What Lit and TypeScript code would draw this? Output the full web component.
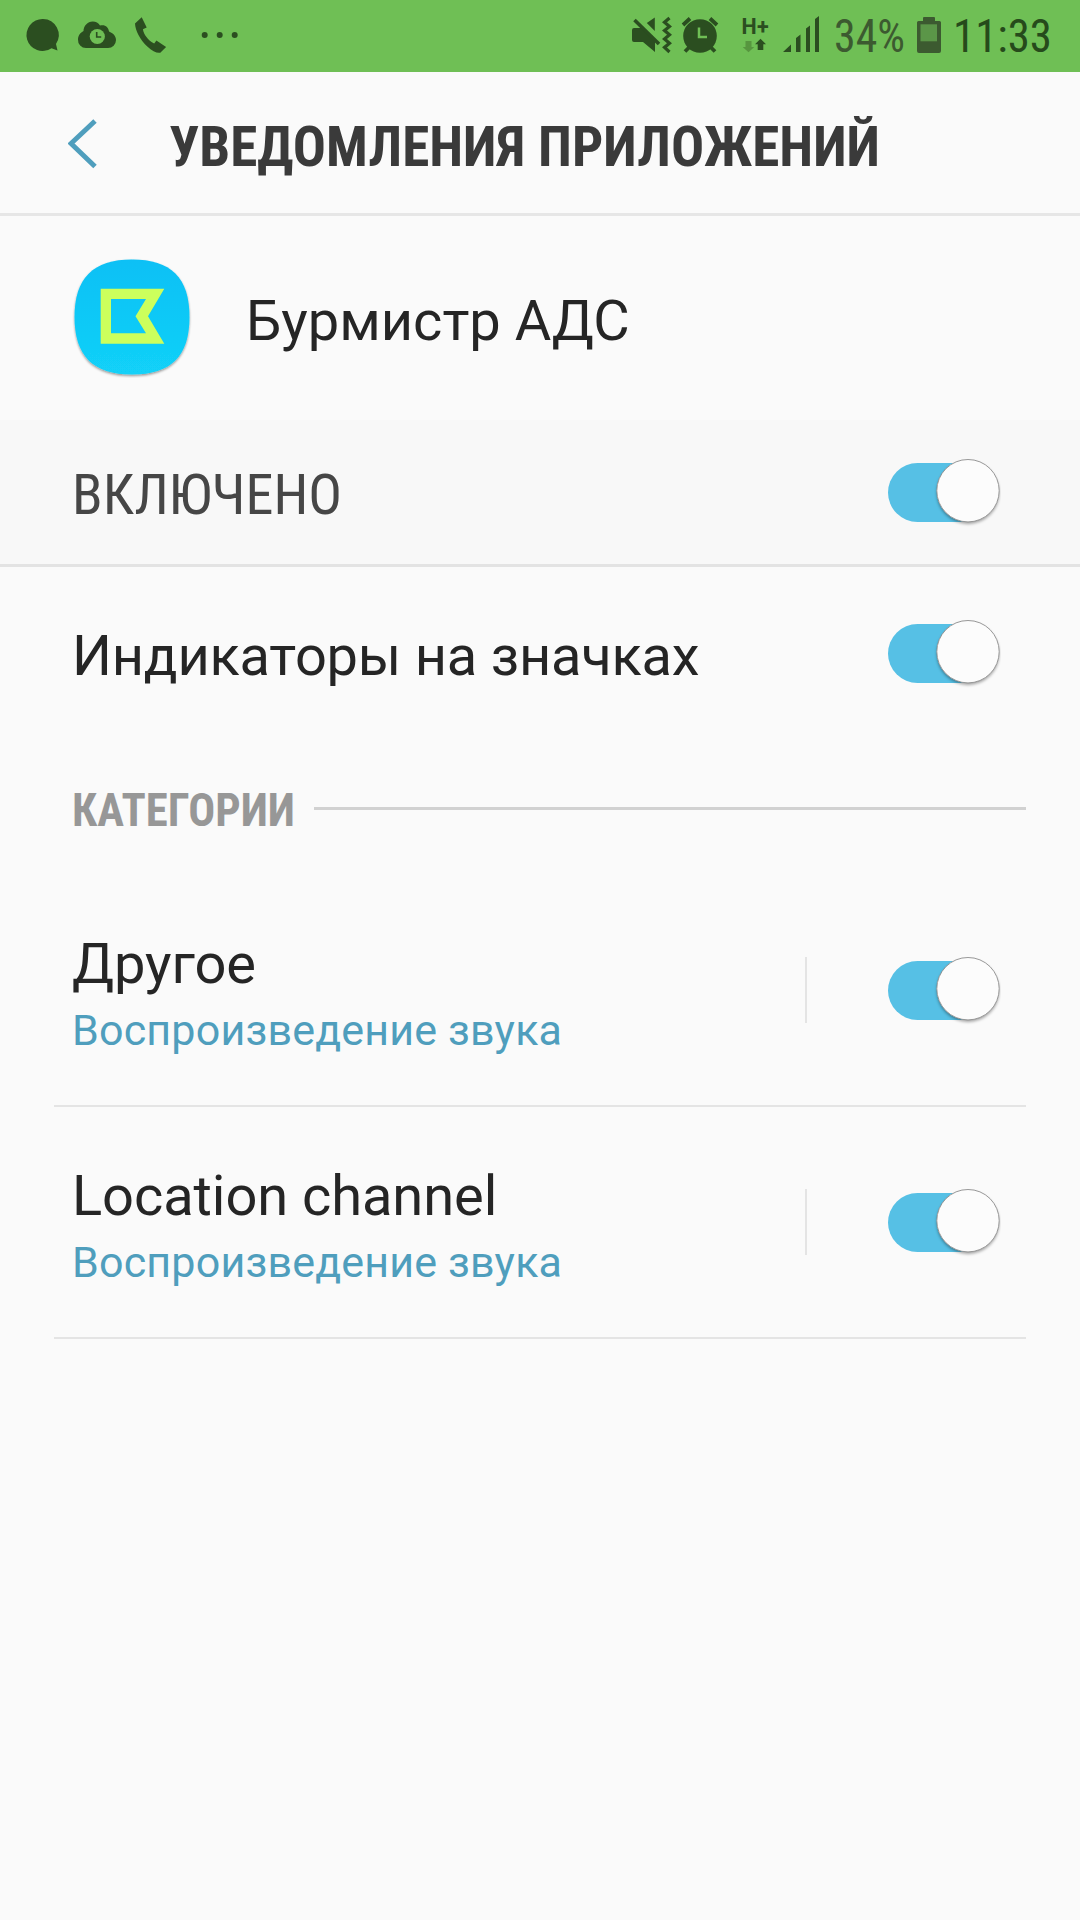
import { LitElement, html, css } from "lit";
import { customElement, property } from "lit/decorators.js";

@customElement("toggle-switch")
class ToggleSwitch extends LitElement {
  static styles = css`
    :host { display: block; flex: none; width: 113px; height: 68px; }
    svg { display: block; }
    .thumb { filter: drop-shadow(0 2px 1.5px rgba(0, 0, 0, 0.35)); }
  `;
  render() {
    return html`<svg width="113" height="68" viewBox="0 0 113 68">
      <rect x="0" y="4" width="106" height="59" rx="29.5" fill="#56c0e5" />
      <circle class="thumb" cx="80" cy="31.700" r="31.200" fill="#fcfcfc" />
      <circle cx="80" cy="31.700" r="31.200" fill="#fcfcfc" stroke="#8c8c8c" stroke-width="0.900" />
    </svg>`;
  }
}

@customElement("condensed-text")
class CondensedText extends LitElement {
  @property({ type: Number }) size = 56;
  @property({ type: Number }) width = 100;
  @property({ type: Number }) weight = 400;
  @property() text = "";
  static styles = css`
    :host { display: block; flex: none; }
    svg { display: block; overflow: visible; }
    text { font-family: "Roboto Condensed", Roboto, "Liberation Sans", sans-serif; font-stretch: 75%; fill: currentColor; }
  `;
  render() {
    const h = Math.round(this.size * 1.2);
    return html`<svg width=${this.width} height=${h}>
      <text x="0" y=${h / 2 + this.size * 0.3555} font-size=${this.size} font-weight=${this.weight}
        textLength=${this.width} lengthAdjust="spacingAndGlyphs">${this.text}</text>
    </svg>`;
  }
}

@customElement("status-bar")
class StatusBar extends LitElement {
  static styles = css`
    :host { display: flex; height: 72px; background: #6fbf55; color: #2b4e20; }
    svg { display: block; flex: none; }
    .texts { display: flex; align-items: flex-start; }
    condensed-text { margin-top: 8px; }
    .percent { color: #3c5a30; margin-left: 4px; }
    .battery { margin-left: 4px; }
    .clock { color: #264a1b; margin-left: 10px; }
    .network { font-family: Roboto, sans-serif; font-weight: 700; font-size: 21.5px; }
  `;
  render() {
    return html`
      <svg width="280" height="72" viewBox="0 0 280 72" fill="#2b4e20">
        <path d="M43 19a16 16 0 1 0 8.500 29.200l6 2.200-1.500-6.500A16 16 0 0 0 43 19z" />
        <path d="M86 48a8 8 0 0 1-8-8.500c0-4 2.500-7 5.500-8.500 0-5 4-9.500 9.200-9.500 3.200 0 5.800 1.500 7.300 4 5-1.300 8.500 1.500 9 6 4 1.500 7 4.500 7 8.500a8 8 0 0 1-8 8z" />
        <circle cx="97.300" cy="36.500" r="7.600" fill="#6fbf55" />
        <path d="M96.700 32v5h4.500" fill="none" stroke="#2b4e20" stroke-width="1.600" />
        <path d="M141.700 17.200l5 10.300-3.800 1.700c.8 5.400 5 10.800 11.300 14.400l2.200-3 9.700 6.500-5.800 5.600c-3 .8-8-1.400-13-6.200-7-6.700-12-15.500-12.300-23z" />
        <circle cx="204.700" cy="35" r="3" /><circle cx="219.700" cy="35" r="3" /><circle cx="234.700" cy="35" r="3" />
      </svg>
      <svg width="550" height="72" viewBox="280 0 550 72" fill="#2b4e20">
        <path d="M632 30q0-2 2-2h8l13 13v11l-12-10h-9q-2 0-2-2zM654.800 17.500v13.500l-8-8z" />
        <path d="M634.500 20l24.500 24" stroke="#2b4e20" stroke-width="3.600" />
        <path d="M669.500 18l-5 4.200 5 4.200-5 4.200 5 4.200-5 4.200 5 4.200-5 4.200 5 4.600" fill="none" stroke="#2b4e20" stroke-width="3.200" />
        <circle cx="700" cy="36" r="16.800" />
        <path d="M683 25l7-6.500M717 25l-7-6.500M689 47.500l-4 4M711 47.500l4 4" stroke="#2b4e20" stroke-width="3.800" />
        <path d="M699 27.500v9.500h8" fill="none" stroke="#6fbf55" stroke-width="2.500" />
        <text class="network" x="741.500 757" y="33.700">H+</text>
        <path d="M745.500 41h6v6h2.800l-5.800 5.300-5.800-5.300h2.800z" fill="#57963f" />
        <path d="M760.500 38.800l5.500 5.500h-2.700V50h-5.600v-5.700H755z" />
        <path d="M783 52l8-7.500V52zM796 52V38l4.500-3.500V52zM806 52V28.500l4-3V52zM815 52V19l4-3V52z" />
      </svg>
      <div class="texts">
        <condensed-text class="percent" size="46" width="71" text="34%"></condensed-text>
        <svg class="battery" width="34" height="72" viewBox="909 0 34 72">
          <path d="M924 17h10q1 0 1 1v3h4.500q1.500 0 1.500 1.500v28.500q0 2-2 2h-20q-2 0-2-2V22.500q0-1.500 1.500-1.500h4.500v-3q0-1 1-1z" fill="#3c5a30" />
          <path d="M920.500 24.300h16.500v17h-16.500z" fill="#5b9648" />
        </svg>
        <condensed-text class="clock" size="46" width="99" text="11:33"></condensed-text>
      </div>
    `;
  }
}

@customElement("channel-row")
class ChannelRow extends LitElement {
  @property() name = "";
  @property() detail = "";
  static styles = css`
    :host { display: flex; box-sizing: border-box; height: 232px; margin: 0 54px; border-bottom: 2px solid #e4e4e4; padding: 56px 26px 0 18px; }
    .labels { flex: 1; }
    .name { font-size: 56px; line-height: 66px; letter-spacing: -0.07px; color: #252525; white-space: nowrap; }
    .detail { font-size: 43px; line-height: 52px; margin-top: 7px; letter-spacing: 0.18px; color: #4f9ebd; white-space: nowrap; }
    .rule { width: 2px; height: 66px; margin: 26px 81px 0 0; background: #e4e4e4; }
    toggle-switch { margin: 26px -1px 0 0; }
  `;
  render() {
    return html`
      <div class="labels">
        <div class="name">${this.name}</div>
        <div class="detail">${this.detail}</div>
      </div>
      <div class="rule"></div>
      <toggle-switch></toggle-switch>
    `;
  }
}

@customElement("app-root")
class AppRoot extends LitElement {
  static styles = css`
    :host { display: block; min-height: 1920px; background: #fafafa; font-family: Roboto, "Liberation Sans", sans-serif; color: #252525; overflow: hidden; }
    header { display: flex; box-sizing: border-box; height: 144px; border-bottom: 3px solid #e6e6e6; padding-top: 40px; color: #3a3a3a; }
    .back { display: block; flex: none; width: 101px; height: 64px; padding-left: 68px; }
    header condensed-text { margin-top: 1px; }
    .app { display: flex; box-sizing: border-box; height: 204px; padding: 38px 0 0 70px; }
    .logo { display: block; flex: none; width: 124px; height: 124px; }
    .row { display: flex; box-sizing: border-box; justify-content: space-between; padding: 0 79px 0 72px; }
    .enabled { height: 147px; padding-top: 39px; background: #f8f8f8; border-bottom: 3px solid #e3e3e3; color: #464646; }
    .enabled condensed-text { margin-top: 1.5px; }
    .badges { height: 171px; padding-top: 53px; }
    .label { font-size: 56px; line-height: 66px; white-space: nowrap; }
    .app .label { margin: 34px 0 0 52px; }
    .badges .label { margin-top: 3px; letter-spacing: -0.22px; }
    .section { display: flex; align-items: center; box-sizing: border-box; height: 137px; padding: 4px 54px 0 72px; color: #979797; }
    .section condensed-text { margin-top: 2px; }
    .line { flex: 1; height: 3px; margin-left: 19px; background: #d1d1d1; }
  `;
  render() {
    return html`
      <status-bar></status-bar>
      <header>
        <svg class="back" viewBox="0 0 101 64"><path d="M27 9L3 31.500 27 54.500" fill="none" stroke="#4f9ebd" stroke-width="5" /></svg>
        <condensed-text size="56" width="711" weight="700" text="УВЕДОМЛЕНИЯ ПРИЛОЖЕНИЙ"></condensed-text>
      </header>
      <div class="app">
        <svg class="logo" viewBox="70 254 124 124">
          <defs>
            <linearGradient id="sky" x1="0" y1="0" x2="0" y2="1"><stop offset="0" stop-color="#0dc0f5" /><stop offset="1" stop-color="#12d1f8" /></linearGradient>
            <filter id="soft" x="-10%" y="-10%" width="120%" height="125%"><feDropShadow dx="0" dy="1.500" stdDeviation="1.200" flood-color="#000" flood-opacity="0.400" /></filter>
          </defs>
          <path filter="url(#soft)" fill="url(#sky)" d="M132 259.500c39 0 57.500 18 57.500 57.500S171 374.500 132 374.500 74.500 356 74.500 317 93 259.500 132 259.500z" />
          <path fill="#ccff5c" fill-rule="evenodd" d="M100.700 288.700h63.600L148 316.300l16.300 27.500h-63.600zM111 299v34.300h35L135.500 316.300 146 299z" />
        </svg>
        <div class="label">Бурмистр АДС</div>
      </div>
      <div class="row enabled">
        <condensed-text size="56" width="270" text="ВКЛЮЧЕНО"></condensed-text>
        <toggle-switch></toggle-switch>
      </div>
      <div class="row badges">
        <div class="label">Индикаторы на значках</div>
        <toggle-switch></toggle-switch>
      </div>
      <div class="section">
        <condensed-text size="46" width="223" weight="700" text="КАТЕГОРИИ"></condensed-text>
        <div class="line"></div>
      </div>
      <channel-row name="Другое" detail="Воспроизведение звука"></channel-row>
      <channel-row name="Location channel" detail="Воспроизведение звука"></channel-row>
    `;
  }
}
